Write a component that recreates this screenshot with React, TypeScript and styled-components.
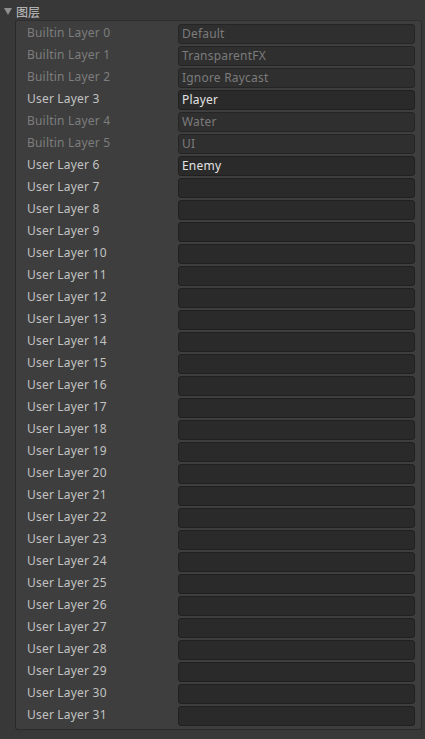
import React from "react";
import styled, { createGlobalStyle } from "styled-components";

const Global = createGlobalStyle`
  html, body { margin: 0; padding: 0; background: #383838; }
  body { font-family: "Noto Sans", "Noto Sans CJK SC", sans-serif; }
`;

const Page = styled.div`
  width: 425px;
  height: 739px;
  background: #383838;
  box-sizing: border-box;
  padding: 2px 3px 0 15px;
  display: flex;
  flex-direction: column;
`;

const Header = styled.div`
  display: flex;
  align-items: center;
  height: 18px;
  margin-left: -15px;
  gap: 2px;
  color: #c4c4c4;
  font-size: 12px;
  font-family: "Noto Sans CJK SC", "Noto Sans", sans-serif;
`;

const Triangle = styled.span`
  width: 0;
  height: 0;
  border-left: 4px solid transparent;
  border-right: 4px solid transparent;
  border-top: 7px solid #8e8e8e;
  margin-left: 4px;
  margin-right: 2px;
`;

const Panel = styled.div`
  box-sizing: border-box;
  width: 407px;
  background: #3e3e3e;
  border: 1px solid #2a2a2a;
  border-top-color: #2e2e2e;
  border-radius: 3px;
  padding: 3px 6px 3px 11px;
  display: flex;
  flex-direction: column;
  gap: 2px;
`;

const Row = styled.div`
  display: grid;
  grid-template-columns: 151px 1fr;
  height: 20px;
  align-items: center;
`;

const Label = styled.div<{ $builtin: boolean }>`
  color: ${(p) => (p.$builtin ? "#7d7d7d" : "#c2c2c2")};
  font-size: 12px;
  letter-spacing: 0.2px;
  white-space: nowrap;
  margin-top: -3px;
`;

const Field = styled.div<{ $disabled: boolean }>`
  box-sizing: border-box;
  height: 20px;
  border-radius: 3px;
  background: ${(p) => (p.$disabled ? "#2f2f2f" : "#2a2a2a")};
  border: 1px solid ${(p) => (p.$disabled ? "#252525" : "#202020")};
  color: ${(p) => (p.$disabled ? "#7b7b7b" : "#e2e2e2")};
  font-size: 12px;
  letter-spacing: 0.2px;
  line-height: 17px;
  padding: 0 3px;
  white-space: nowrap;
  overflow: hidden;
`;

const builtin: Record<number, string> = {
  0: "Default",
  1: "TransparentFX",
  2: "Ignore Raycast",
  4: "Water",
  5: "UI",
};
const user: Record<number, string> = { 3: "Player", 6: "Enemy" };

export default function App() {
  const rows = Array.from({ length: 32 }, (_, i) => i);
  return (
    <Page>
      <Global />
      <Header>
        <Triangle />
        图层
      </Header>
      <Panel>
        {rows.map((i) => {
          const isBuiltin = i in builtin;
          return (
            <Row key={i}>
              <Label $builtin={isBuiltin}>
                {isBuiltin ? "Builtin" : "User"} Layer {i}
              </Label>
              <Field $disabled={isBuiltin}>{isBuiltin ? builtin[i] : user[i] ?? ""}</Field>
            </Row>
          );
        })}
      </Panel>
    </Page>
  );
}
